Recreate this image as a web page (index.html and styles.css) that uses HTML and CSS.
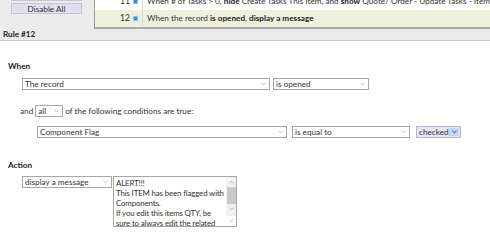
FILE: index.html
```
<!DOCTYPE html>
<html lang="en">
<head>
    <meta charset="UTF-8">
    <title>Rule #12</title>
    <link rel="stylesheet" href="styles.css">
</head>
<body>
    <div class="top">
        <div class="top-row">
            <div class="sidebar">
                <div class="side-button">Enable All</div>
                <div class="side-button">Disable All</div>
            </div>
            <div class="rule-list">
                <div class="rule-row">
                    <div class="rule-num">11 <span class="rule-icon"></span></div>
                    <div class="rule-text">When # of Tasks &gt; 0, <b>hide</b> Create Tasks This Item, and <b>show</b> Quote/ Order - Update Tasks - Items/ Components</div>
                </div>
                <div class="rule-row selected">
                    <div class="rule-num">12 <span class="rule-icon"></span></div>
                    <div class="rule-text">When the record <b>is opened</b>, <b>display a message</b></div>
                </div>
            </div>
        </div>
        <div class="rule-title">Rule #12</div>
    </div>

    <div class="rule-body">
        <div class="section-title">When</div>
        <div class="line when-line">
            <div class="select w-record"><span>The record</span><svg class="caret" viewBox="0 0 6 4"><path d="M0.5 0.5 L3 3 L5.5 0.5" /></svg></div>
            <div class="select w-event"><span>is opened</span><svg class="caret" viewBox="0 0 6 4"><path d="M0.5 0.5 L3 3 L5.5 0.5" /></svg></div>
        </div>
        <div class="line match-line">
            <span>and</span>
            <div class="select w-all"><span>all</span><svg class="caret" viewBox="0 0 6 4"><path d="M0.5 0.5 L3 3 L5.5 0.5" /></svg></div>
            <span>of the following conditions are true:</span>
        </div>
        <div class="line condition-line">
            <div class="select w-field"><span>Component Flag</span><svg class="caret" viewBox="0 0 6 4"><path d="M0.5 0.5 L3 3 L5.5 0.5" /></svg></div>
            <div class="select w-op"><span>is equal to</span><svg class="caret" viewBox="0 0 6 4"><path d="M0.5 0.5 L3 3 L5.5 0.5" /></svg></div>
            <div class="select checked-select"><span>checked</span><span class="drop-btn"><svg viewBox="0 0 6 4"><path d="M0.5 0.5 L3 3 L5.5 0.5" /></svg></span></div>
        </div>

        <div class="section-title action-title">Action</div>
        <div class="line action-line">
            <div class="select w-action"><span>display a message</span><svg class="caret" viewBox="0 0 6 4"><path d="M0.5 0.5 L3 3 L5.5 0.5" /></svg></div>
            <div class="message-box">
                <div class="message-text">ALERT!!!<br>This ITEM has been flagged with<br>Components.<br>If you edit this items QTY, be<br>sure to always edit the related<br>Components as well.</div>
                <div class="scrollbar">
                    <svg class="sb-arrow" viewBox="0 0 6 4"><path d="M0.5 3.5 L3 1 L5.5 3.5" /></svg>
                    <div class="sb-thumb"></div>
                    <svg class="sb-arrow" viewBox="0 0 6 4"><path d="M0.5 0.5 L3 3 L5.5 0.5" /></svg>
                    <div class="sb-corner"><svg viewBox="0 0 8 8"><path d="M7 3 L3 7 M7 5.5 L5.5 7" /></svg></div>
                </div>
            </div>
        </div>
    </div>
</body>
</html>
```

FILE: styles.css
```
body {
    margin: 0;
    font-family: Lato, "Noto Sans", sans-serif;
    font-size: 8.2px;
    color: #333;
    background: #fff;
    overflow: hidden;
}
b {
    font-weight: bold;
    color: #222;
}
.top {
    background: #ebebeb;
    border-bottom: 1px solid #c9c9c9;
}
.top-row {
    display: flex;
    align-items: flex-start;
}
.sidebar {
    width: 94px;
    flex: none;
    margin-top: -10px;
    display: flex;
    flex-direction: column;
    gap: 2px;
    padding-left: 11px;
    box-sizing: border-box;
}
.side-button {
    width: 71px;
    height: 11px;
    line-height: 10px;
    box-sizing: border-box;
    background: #dfdfef;
    border: 1px solid #c6c6d6;
    text-align: center;
    font-size: 8.2px;
    color: #333;
}
.rule-list {
    flex: 1;
    min-width: 0;
    margin-top: -7px;
    background: #fff;
    border-left: 1px solid #9a9a9a;
    border-bottom: 2px solid #a9a9a9;
}
.rule-row {
    display: flex;
    height: 17px;
    line-height: 17px;
    white-space: nowrap;
}
.rule-row.selected {
    background: #efefdd;
}
.rule-num {
    width: 48px;
    flex: none;
    text-align: right;
    padding-right: 4px;
    box-sizing: border-box;
    border-right: 1px solid #d8d8d8;
    display: flex;
    justify-content: flex-end;
    align-items: center;
    gap: 3px;
    font-size: 8.6px;
}
.rule-icon {
    width: 5px;
    height: 5px;
    background: #3d8fd6;
    border: 1px solid #8cc0ec;
    box-sizing: border-box;
}
.rule-text {
    padding-left: 4px;
    overflow: hidden;
}
.rule-title {
    font-weight: bold;
    padding-left: 3px;
    height: 11px;
    line-height: 11px;
    color: #222;
}
.rule-body {
    padding: 20px 0 0 8px;
}
.section-title {
    font-weight: bold;
    height: 11px;
    line-height: 11px;
    color: #222;
}
.action-title {
    margin-top: 22px;
}
.line {
    display: flex;
    align-items: center;
}
.when-line {
    margin: 6px 0 0 14px;
    gap: 3px;
}
.match-line {
    margin: 15px 0 0 12px;
    gap: 2px;
}
.condition-line {
    margin: 9px 0 0 29px;
    gap: 5px;
}
.action-line {
    margin: 5px 0 0 14px;
    gap: 1px;
    align-items: flex-start;
}
.select {
    height: 12px;
    box-sizing: border-box;
    border: 1px solid #a6a6a6;
    background: #fff;
    display: flex;
    align-items: center;
    justify-content: space-between;
    padding: 0 3px 0 2px;
    font-size: 8.2px;
    flex: none;
}
.caret {
    width: 5px;
    height: 4px;
    fill: none;
    stroke: #9a9a9a;
    stroke-width: 0.8;
}
.w-record { width: 248px; }
.w-event { width: 96px; }
.w-all { width: 28px; }
.w-field { width: 250px; }
.w-op { width: 118px; }
.w-action { width: 90px; }
.checked-select {
    width: 45px;
    margin-left: 1px;
    background: #e4e4f4;
    border-color: #b6b6d0;
    padding-right: 1px;
}
.drop-btn {
    width: 10px;
    height: 8px;
    background: #c5d6f2;
    display: flex;
    align-items: center;
    justify-content: center;
}
.drop-btn svg {
    width: 5px;
    height: 4px;
    fill: none;
    stroke: #2a4f9a;
    stroke-width: 1.2;
}
.message-box {
    width: 124px;
    height: 51px;
    box-sizing: border-box;
    border: 1px solid #a6a6a6;
    display: flex;
    background: #fff;
}
.message-text {
    flex: 1;
    min-width: 0;
    padding: 1px 0 0 2px;
    font-size: 7.9px;
    letter-spacing: -0.15px;
    line-height: 10px;
    white-space: nowrap;
    overflow: hidden;
}
.scrollbar {
    width: 10px;
    flex: none;
    display: flex;
    flex-direction: column;
    align-items: center;
    background: #f1f1f1;
}
.sb-arrow {
    width: 5px;
    height: 4px;
    margin: 3px 0;
    fill: none;
    stroke: #888;
    stroke-width: 0.8;
}
.sb-thumb {
    width: 9px;
    height: 17px;
    background: #c9c9c9;
}
.sb-corner {
    margin-top: auto;
    width: 10px;
    height: 10px;
    background: #fff;
}
.sb-corner svg {
    width: 8px;
    height: 8px;
    fill: none;
    stroke: #bbb;
    stroke-width: 0.8;
}
```
